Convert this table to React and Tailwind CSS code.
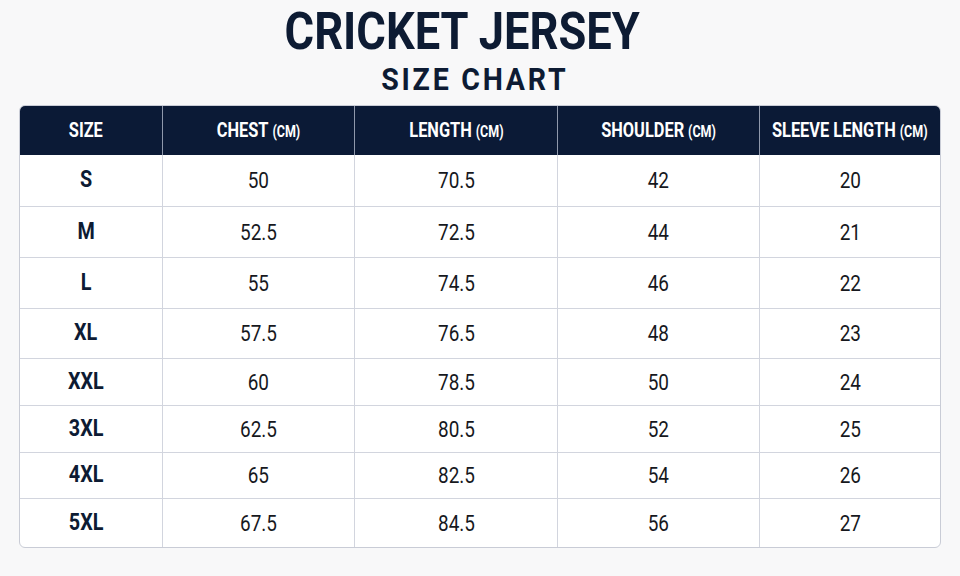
const columns = [
  { label: "SIZE", unit: "", width: "w-[142px] shrink-0 pr-[10px]" },
  { label: "CHEST", unit: "(CM)", width: "w-[192px] shrink-0" },
  { label: "LENGTH", unit: "(CM)", width: "w-[203px] shrink-0" },
  { label: "SHOULDER", unit: "(CM)", width: "w-[202px] shrink-0" },
  { label: "SLEEVE LENGTH", unit: "(CM)", width: "flex-1 min-w-0" },
];

// row heights follow the chart, lower rows are a bit tighter
const rows = [
  { h: "h-[51px]", cells: ["S", "50", "70.5", "42", "20"] },
  { h: "h-[51px]", cells: ["M", "52.5", "72.5", "44", "21"] },
  { h: "h-[51px]", cells: ["L", "55", "74.5", "46", "22"] },
  { h: "h-[50px]", cells: ["XL", "57.5", "76.5", "48", "23"] },
  { h: "h-[47px]", cells: ["XXL", "60", "78.5", "50", "24"] },
  { h: "h-[47px]", cells: ["3XL", "62.5", "80.5", "52", "25"] },
  { h: "h-[46px]", cells: ["4XL", "65", "82.5", "54", "26"] },
  { h: "h-[49px]", cells: ["5XL", "67.5", "84.5", "56", "27"] },
];

export default function App() {
  return (
    <div className="w-[960px] h-[576px] bg-[#f8f8f9] flex flex-col items-center text-[#0d1b33] font-['Roboto',sans-serif]">
      {/* Title */}
      <h1 className="mt-[1px] mr-[35px] text-[52px] leading-[62px] font-bold whitespace-nowrap scale-x-[0.87]">
        CRICKET JERSEY
      </h1>
      <h2 className="mr-[10px] text-[31px] leading-[34px] font-bold tracking-[3px] whitespace-nowrap scale-x-[0.92]">
        SIZE CHART
      </h2>

      {/* Table */}
      <div className="mt-[8px] w-[922px] bg-white border border-[#c9ccd6] rounded-md overflow-hidden">
        <div className="flex h-[49px] bg-[#0b1a36] text-white">
          {columns.map((c, i) => (
            <div
              key={c.label}
              className={`${c.width} flex items-center justify-center ${
                i > 0 ? "border-l border-[#8f98ab]" : ""
              }`}
            >
              <div className="flex items-baseline gap-[5px] whitespace-nowrap scale-x-[0.78]">
                <span className="text-[21px] font-bold">{c.label}</span>
                {c.unit && <span className="text-[16px] font-bold">{c.unit}</span>}
              </div>
            </div>
          ))}
        </div>
        {rows.map((r, ri) => (
          <div
            key={r.cells[0]}
            className={`flex ${r.h} ${ri > 0 ? "border-t border-[#d2d5de]" : ""}`}
          >
            {r.cells.map((v, i) => (
              <div
                key={i}
                className={`${columns[i].width} flex items-center justify-center ${
                  i > 0 ? "border-l border-[#d2d5de]" : ""
                }`}
              >
                <span
                  className={`scale-x-[0.86] ${
                    i === 0
                      ? "text-[23px] font-bold text-[#0d1b33]"
                      : "text-[22px] text-[#16181d]"
                  }`}
                >
                  {v}
                </span>
              </div>
            ))}
          </div>
        ))}
      </div>
    </div>
  );
}
